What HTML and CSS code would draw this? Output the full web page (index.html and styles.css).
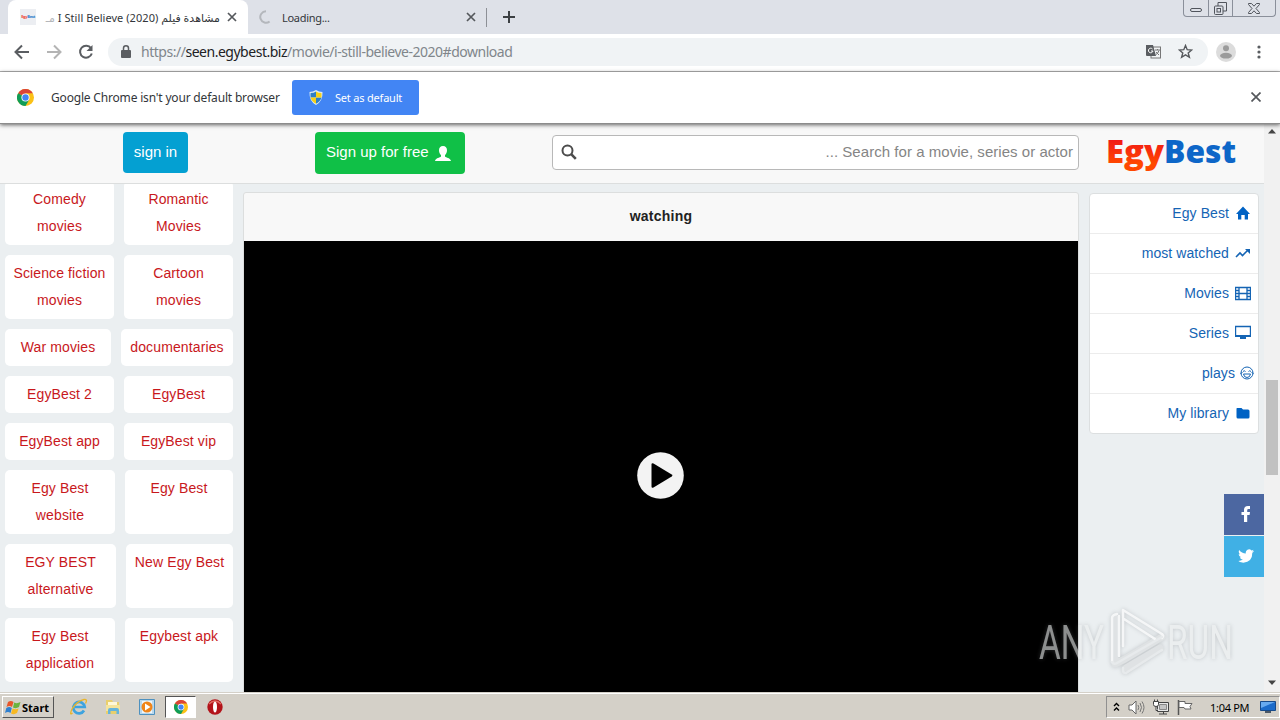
FILE: index.html
```html
<!DOCTYPE html>
<html lang="en">
<head>
  <meta charset="utf-8">
  <title>EgyBest</title>
  <link rel="stylesheet" href="styles.css">
</head>
<body>
  <div class="tabstrip">
    <div class="tab active">
      <span class="favicon"><b>Egy</b><i>Best</i></span>
      <span class="tab-title" dir="rtl"><bdi>مشاهدة فيلم</bdi> <bdi class="latin">I Still Believe (2020)</bdi> <bdi class="faded">مـ</bdi></span>
      <svg class="close" width="10" height="10" viewBox="0 0 10 10"><path d="M1 1l8 8M9 1l-8 8"/></svg>
    </div>
    <div class="tab">
      <svg class="spinner" width="14" height="14" viewBox="0 0 14 14"><path d="M7 1.3a5.7 5.7 0 1 0 3.6 10.1"/></svg>
      <span class="tab-title loading">Loading...</span>
      <svg class="close" width="10" height="10" viewBox="0 0 10 10"><path d="M1 1l8 8M9 1l-8 8"/></svg>
    </div>
    <svg class="plus" width="12" height="12" viewBox="0 0 12 12"><path d="M6 0v12M0 6h12"/></svg>
    <div class="window-buttons">
      <span class="win-min"><svg width="12" height="4" viewBox="0 0 12 4"><rect x=".5" y=".5" width="11" height="3" rx="1.5"/></svg></span>
      <span class="win-max"><svg width="13" height="13" viewBox="0 0 13 13"><path d="M4 4V.5h8.500v8.500H9"/><rect x=".5" y="4" width="8.500" height="8.500" rx="1"/><rect x="3" y="6.500" width="3.500" height="3.500"/></svg></span>
      <span class="win-close"><svg width="12" height="11" viewBox="0 0 12 11"><path d="M.5.5h3L6 3.200 8.500.500h3v1L8 5.500l3.500 4v1h-3L6 7.800 3.500 10.500h-3v-1L4 5.500.5 1.500z"/></svg></span>
    </div>
  </div>

  <div class="toolbar">
    <svg class="nav" width="16" height="16" viewBox="0 0 16 16"><path d="M15 8H2M8 1.500L1.500 8 8 14.500"/></svg>
    <svg class="nav off" width="16" height="16" viewBox="0 0 16 16"><path d="M1 8h13M8 1.500L14.500 8 8 14.500"/></svg>
    <svg class="nav" width="16" height="16" viewBox="0 0 16 16"><path d="M13 4.200A6 6 0 1 0 13.800 9.500"/><path d="M14.500 1v6h-6z" fill="#5a5d61" stroke="none"/></svg>
    <div class="omnibox">
      <svg width="10" height="13" viewBox="0 0 10 13"><rect x="0" y="5" width="10" height="8" rx="1" fill="#5a5d61"/><path d="M2.500 5V3.300a2.500 2.500 0 0 1 5 0V5" fill="none" stroke="#5a5d61" stroke-width="1.500"/></svg>
      <span class="url"><span class="scheme">https://</span><b>seen.egybest.biz</b><span class="path">/movie/i-still-believe-2020#download</span></span>
      <svg class="translate" width="15" height="15" viewBox="0 0 15 15"><rect x="5" y="3" width="9.500" height="11" fill="#f1f3f4" stroke="#777"/><path d="M0 1h7l3 11H1q-1 0-1-1z" fill="#5a5d61"/><path d="M6.500 5A2.300 2.300 0 1 0 7 7H5" fill="none" stroke="#fff"/><path d="M9 6h5M11.500 5v1M13 6.500q-1 3-3 4M10 8l3 3" fill="none" stroke="#777"/></svg>
      <svg width="15" height="15" viewBox="0 0 15 15"><path d="M7.500 1.500l1.700 4.200 4.500.300-3.500 2.900 1.200 4.400-3.900-2.400-3.900 2.400 1.200-4.400L1.300 6l4.500-.300z" fill="none" stroke="#55585c" stroke-width="1.400"/></svg>
    </div>
    <svg class="avatar" width="20" height="20" viewBox="0 0 20 20"><circle cx="10" cy="10" r="10" fill="#dcdcdc"/><circle cx="10" cy="6.300" r="3" fill="#9b9b9b"/><ellipse cx="10" cy="13.700" rx="6" ry="2.900" fill="#9b9b9b"/></svg>
    <svg class="dots" width="4" height="14" viewBox="0 0 4 14" fill="#5a5d61"><circle cx="2" cy="2" r="1.600"/><circle cx="2" cy="7" r="1.600"/><circle cx="2" cy="12" r="1.600"/></svg>
  </div>

  <div class="infobar">
    <svg width="17" height="17" viewBox="0 0 48 48"><circle cx="24" cy="24" r="24" fill="#fbc116"/><path d="M24 24L3.200 12A24 24 0 0 1 44.800 12H24z" fill="#db4437"/><path d="M3.200 12A24 24 0 0 0 24 48l10.400-18L24 24z" fill="#0f9d58"/><circle cx="24" cy="24" r="11.500" fill="#fff"/><circle cx="24" cy="24" r="9" fill="#4285f4"/></svg>
    <span class="info-text">Google Chrome isn't your default browser</span>
    <button class="default-btn">
      <svg width="14" height="15" viewBox="0 0 14 15"><path d="M7 0q3 2 6.500 2 .5 9-6.500 13Q0 11 .5 2 4 2 7 0z" fill="#dcebf5"/><path d="M7 1.500v6H1.600Q1.300 5 1.600 3 5 3 7 1.500zM7 7.500h5.400Q11.500 11.500 7 13.800z" fill="#2f7fc6"/><path d="M7 1.500v6h5.400q.3-2.500 0-4.500Q9 3 7 1.500zM7 7.500H1.600Q2.500 11.500 7 13.800z" fill="#f7d117"/></svg>
      <span>Set as default</span>
    </button>
    <svg class="close" width="10" height="10" viewBox="0 0 10 10"><path d="M.5.5l9 9M9.500.5l-9 9"/></svg>
  </div>

  <div class="viewport">
    <div class="page">
      <header class="header">
        <a class="btn signin">sign in</a>
        <a class="btn signup"><span>Sign up for free</span>
          <svg width="16" height="15" viewBox="0 0 16 15"><path d="M8 0c2.600 0 4 1.700 4 4.200 0 2-.8 3.800-2 4.800v1.500c1 1.200 5.500 1.500 6 4.500H0c.5-3 5-3.300 6-4.500V9C4.800 8 4 6.200 4 4.200 4 1.700 5.400 0 8 0z" fill="#fff"/></svg>
        </a>
        <div class="search">
          <svg width="16" height="16" viewBox="0 0 16 16"><circle cx="6.500" cy="6.500" r="5" fill="none" stroke="#4c4c4c" stroke-width="2"/><path d="M10.200 10.200l4.600 4.600" stroke="#4c4c4c" stroke-width="2.600"/></svg>
          <span>... Search for a movie, series or actor</span>
        </div>
        <svg class="logo" width="134" height="46" viewBox="0 0 134 46">
          <defs><linearGradient id="red" x1="0" y1="0" x2="0" y2="1"><stop offset="0.200" stop-color="#f01418"/><stop offset="0.800" stop-color="#ff4800"/></linearGradient></defs>
          <text x="-1" y="34" textLength="58" lengthAdjust="spacingAndGlyphs" fill="url(#red)">Egy</text>
          <text x="57" y="34" textLength="72" lengthAdjust="spacingAndGlyphs" fill="#0d66c8">Best</text>
        </svg>
      </header>

      <div class="columns">
        <div class="tags">
          <div class="tag-row"><a class="w109">Comedy<br>movies</a><a>Romantic<br>Movies</a></div>
          <div class="tag-row"><a class="w109">Science fiction<br>movies</a><a>Cartoon<br>movies</a></div>
          <div class="tag-row"><a class="w106">War movies</a><a>documentaries</a></div>
          <div class="tag-row"><a class="w109">EgyBest 2</a><a>EgyBest</a></div>
          <div class="tag-row"><a class="w109">EgyBest app</a><a>EgyBest vip</a></div>
          <div class="tag-row"><a class="w110">Egy Best<br>website</a><a>Egy Best</a></div>
          <div class="tag-row"><a class="w111">EGY BEST<br>alternative</a><a>New Egy Best</a></div>
          <div class="tag-row"><a class="w110">Egy Best<br>application</a><a>Egybest apk</a></div>
        </div>

        <div class="watch">
          <h2>watching</h2>
          <div class="player">
            <svg width="47" height="47" viewBox="0 0 47 47"><circle cx="23.500" cy="23.500" r="23.300" fill="#f3f3f3"/><path d="M14.500 12.500q0-2 2-1l18.200 11q1.600 1 0 2l-18.200 11q-2 1-2-1z" fill="#000"/></svg>
          </div>
        </div>

        <nav class="menu">
          <a>Egy Best<svg width="16" height="16" viewBox="0 0 16 16"><path d="M8 1.500L15 9h-2v5.500H9.700V10H6.300v4.500H3V9H1z" fill="#0062c4"/></svg></a>
          <a>most watched<svg width="16" height="16" viewBox="0 0 16 16"><path d="M1 12l4-4 2.500 2.500L13 5" fill="none" stroke="#1464b4" stroke-width="1.600"/><path d="M10 4h5v5z" fill="#1464b4"/></svg></a>
          <a>Movies<svg width="16" height="16" viewBox="0 0 16 16"><path d="M.5 2.500h15v12H.5zM4 2.500v12M12 2.500v12M4 8.500h8M.5 5.500H4M.5 8.500H4M.5 11.500H4M12 5.500h3.500M12 8.500h3.500M12 11.500h3.500" fill="none" stroke="#1464b4" stroke-width="1.300"/></svg></a>
          <a>Series<svg width="16" height="16" viewBox="0 0 16 16"><path d="M.5 1.500h15V11H.5z" fill="none" stroke="#1464b4" stroke-width="1.400"/><path d="M0 10h16v2h-5v2H5v-2H0z" fill="#1464b4"/></svg></a>
          <a class="plays">plays<svg width="14" height="14" viewBox="0 0 14 14" fill="none" stroke="#1464b4"><circle cx="7" cy="7" r="6"/><path d="M3 5.500q1.200-1.500 2.500 0M8.500 5.500q1.200-1.500 2.500 0M3.500 8h7q-.5 3.500-3.500 3.500T3.500 8zM.5 7.500l2-1M13.500 7.500l-2-1"/></svg></a>
          <a>My library<svg width="16" height="16" viewBox="0 0 16 16"><path d="M2 3h4.500L8 4.500h5q1.500 0 1.500 1.500v6q0 1.500-1.500 1.500H3Q1.500 13.500 1.500 12V3.500z" fill="#0062c4"/></svg></a>
        </nav>
      </div>

      <div class="social">
        <a class="fb"><svg width="10" height="16" viewBox="0 0 10 16"><path d="M3 16V9H.5V6H3V4q0-4 4-4h2v3H7.500Q6.200 3 6.200 4.200V6H9l-.4 3H6.200v7z" fill="#fff"/></svg></a>
        <a class="tw"><svg width="16" height="14" viewBox="0 0 24 20"><path d="M24 2.400q-1.200.5-2.800.8Q22.800 2.200 23.300.500q-1.500.9-3.100 1.200A4.900 4.900 0 0 0 11.800 6.200Q5.500 6 1.700.900 0 5 3.200 7.500 2 7.400 1 6.900q0 3.800 3.900 4.800-1 .3-2.200.1 1 3.200 4.600 3.400Q4.300 17.500 0 17.300 2 20 8 20 21.500 19 21.500 5.100 23.200 4 24 2.400z" fill="#fff"/></svg></a>
      </div>

      <svg class="watermark" width="204" height="74" viewBox="0 0 204 74">
        <g class="wm-mark" fill="none" stroke-linejoin="round" stroke-linecap="round">
          <path class="wm-shade" d="M79 12v46l10-5M89 53l37-22M90 62l34-20"/>
          <path d="M76 56V12q0-3 5-4M83 50V10M87 40V4l39 24q2 2 0 4M88 13l31 20"/>
          <path class="wm-low" d="M76 56q2 3 5 1l45-26M90 67l36-23M90 67q-4 0-3-5"/>
        </g>
        <g class="wm-text">
          <text x="3" y="53" textLength="65" lengthAdjust="spacingAndGlyphs">ANY</text>
          <text x="131" y="53" textLength="66" lengthAdjust="spacingAndGlyphs">RUN</text>
        </g>
      </svg>
    </div>

    <div class="scrollbar">
      <svg width="8" height="5" viewBox="0 0 8 5"><path d="M0 4.500L4 0l4 4.500z" fill="#444"/></svg>
      <div class="thumb"></div>
      <svg width="8" height="5" viewBox="0 0 8 5"><path d="M0 .5L4 5 8 .5z" fill="#444"/></svg>
    </div>
  </div>

  <div class="taskbar">
    <div class="start">
      <svg width="16" height="15" viewBox="0 0 16 15"><path d="M3 2q3-2 5.500 0L7 7Q4.500 5 1.500 7z" fill="#e8562a"/><path d="M9.200 2.500Q12 4 15.500 2L14 7q-3 2-6 .5z" fill="#6cb33e"/><path d="M1.300 8q3-2 5.500 0L5.500 13Q3 11 0 13z" fill="#2f80d0"/><path d="M7.600 8.500q3 1.500 6 0L12 13q-3 2-6 .5z" fill="#f7b922"/></svg>
      Start
    </div>
    <div class="quick">
      <svg width="18" height="18" viewBox="0 0 18 18"><path d="M14 12.500A5.700 5.700 0 1 1 14.700 9H5" fill="none" stroke="#3da3df" stroke-width="2.700"/><path d="M2.500 15Q-1 18 2 11 7 3 14 1.500q4-.5 1.500 4" fill="none" stroke="#e8b52c" stroke-width="1.300"/></svg>
      <svg width="18" height="18" viewBox="0 0 18 18"><path d="M2 2h6l1 2h6v12H2z" fill="#e9cf6d"/><path d="M4 4h9v4H4z" fill="#fff8d8"/><path d="M2 7h14v6H2z" fill="#f5e49c"/><path d="M4 16v-4q0-2 2-2h7q2 0 2 2v4h-2.500v-3h-6v3z" fill="#65b4dc"/></svg>
      <svg width="18" height="18" viewBox="0 0 18 18"><path d="M1.500 1.500h15v15h-15z" fill="#b9d8ed" stroke="#4e91bf"/><path d="M4 3h10v12H4z" fill="#eef6fb"/><circle cx="9" cy="9" r="5.500" fill="#f08519"/><path d="M7 5.500L12.500 9 7 12.500z" fill="#fff"/></svg>
    </div>
    <div class="running">
      <svg width="14" height="14" viewBox="0 0 48 48"><circle cx="24" cy="24" r="24" fill="#fbc116"/><path d="M24 24L3.200 12A24 24 0 0 1 44.800 12H24z" fill="#db4437"/><path d="M3.200 12A24 24 0 0 0 24 48l10.400-18L24 24z" fill="#0f9d58"/><circle cx="24" cy="24" r="11.500" fill="#fff"/><circle cx="24" cy="24" r="9" fill="#4285f4"/></svg>
    </div>
    <svg class="opera" width="16" height="16" viewBox="0 0 16 16"><circle cx="8" cy="8" r="7.700" fill="#b3131a"/><path d="M2 5q6-6 12 0" fill="none" stroke="#e06a62" stroke-width="1.500"/><ellipse cx="8" cy="8" rx="2" ry="5.500" fill="#fff"/></svg>
    <div class="tray">
      <svg width="7" height="10" viewBox="0 0 7 10"><path d="M1 4l2.500-2.500L6 4M1 8.500L3.500 6 6 8.500" fill="none" stroke="#000" stroke-width="1.400"/></svg>
      <svg width="17" height="15" viewBox="0 0 17 15"><path d="M1 5h3l4-4v13l-4-4H1z" fill="#fff" stroke="#666"/><path d="M10 5q1.500 2.500 0 5M12 3q3 4.500 0 9M14 1.500q4 6 0 12" fill="none" stroke="#777"/></svg>
      <svg width="16" height="16" viewBox="0 0 16 16"><path d="M4.500 3.500h11v9h-11zM6 15h8M10.500 13v2" fill="#e8e8e8" stroke="#444"/><path d="M6.500 5.500h7v5h-7z" fill="#c4c4c4" stroke="#888"/><path d="M.5 2.500h5v3q0 2-2.500 2t-2.500-2zM1.500.5v2M4.500.5v2M3 7.500v4h2" fill="#fff" stroke="#444"/></svg>
      <svg width="16" height="15" viewBox="0 0 16 15"><path d="M1.500 0v15" stroke="#555" stroke-width="1.500"/><path d="M2 1.500h6v2h7l-2 3 1 2.500H8l-1-1.500H2z" fill="#fff" stroke="#666"/></svg>
      <span class="clock">1:04 PM</span>
      <svg width="16" height="13" viewBox="0 0 16 13"><path d="M.5.5h15v9H.5z" fill="#1b6bca" stroke="#174a8a"/><path d="M1 1h14L1 7z" fill="#67aaf0"/><path d="M5 10h6v2H5z" fill="#4c5866"/></svg>
    </div>
  </div>
</body>
</html>
```

FILE: styles.css
```css
* {
  box-sizing: border-box;
}

body {
  margin: 0;
  width: 1280px;
  height: 720px;
  overflow: hidden;
  display: flex;
  flex-direction: column;
  font-family: "Liberation Sans", Arial, sans-serif;
  background: #fff;
}

svg {
  display: block;
  flex: none;
}

/* browser window */
.tabstrip {
  height: 34px;
  flex: none;
  display: flex;
  background: #dee1e8;
  font: 11px "Noto Sans", sans-serif;
  color: #33363a;
}

.tab {
  width: 239px;
  display: flex;
  align-items: center;
  padding-left: 11px;
  background: linear-gradient(#8d9096, #8d9096) right 8px / 1px 19px no-repeat;
}

.tab.active {
  width: 240px;
  margin-left: 8px;
  padding-left: 12px;
  background: #fff;
  border-radius: 8px 8px 0 0;
}

.favicon {
  width: 16px;
  height: 16px;
  background: #eceef2;
  font-size: 4px;
  line-height: 16px;
  text-align: center;
  white-space: nowrap;
  letter-spacing: -0.3px;
}

.favicon b {
  color: #f04030;
}

.favicon i {
  color: #2878c8;
  font-style: normal;
  font-weight: bold;
}

.tab-title {
  margin-left: 9px;
  white-space: nowrap;
  font-family: "Noto Sans", "DejaVu Sans", sans-serif;
}

.tab-title.loading {
  width: 184px;
  letter-spacing: -0.3px;
}

.active .tab-title {
  width: 176px;
  margin-left: 8px;
}

.latin {
  letter-spacing: 0.05px;
}

.faded {
  color: #b4b6b9;
}

.close {
  fill: none;
  stroke: #55585c;
  stroke-width: 1.7;
}

.active .close {
  margin-left: 7px;
}

.spinner {
  fill: none;
  stroke: #b4b7bc;
  stroke-width: 2;
}

.plus {
  margin: 11px 0 0 16px;
  stroke: #3c4043;
  stroke-width: 2;
}

.window-buttons {
  margin-left: auto;
  margin-right: 4px;
  width: 93px;
  height: 17px;
  display: flex;
  border: 1px solid #8a8f9a;
  border-top: 0;
  border-radius: 0 0 4px 4px;
  fill: none;
  stroke: #50545c;
}

.window-buttons span {
  display: flex;
  justify-content: center;
  align-items: center;
  width: 25px;
  border-right: 1px solid #8a8f9a;
}

.window-buttons .win-min {
  padding-top: 4px;
}

.window-buttons .win-close {
  width: 42px;
  border: 0;
}

.toolbar {
  height: 38px;
  flex: none;
  display: flex;
  align-items: center;
  padding: 0 19px 2px 14px;
  border-bottom: 1px solid #b4b4b4;
}

.nav {
  margin-right: 16px;
  fill: none;
  stroke: #5a5d61;
  stroke-width: 2;
}

.nav.off {
  stroke: #b4b4b4;
}

.omnibox {
  flex: 1;
  height: 28px;
  margin-left: -2px;
  padding: 0 14px 0 13px;
  display: flex;
  align-items: center;
  border-radius: 14px;
  background: #f0f3f5;
}

.url {
  margin-left: 10px;
  font: 14px "Noto Sans", sans-serif;
  letter-spacing: -0.48px;
  color: #80868b;
}

.url b {
  font-weight: normal;
  color: #202124;
}

.translate {
  margin: 0 17px 0 auto;
}

.omnibox {
  padding-right: 14px;
  margin-right: -8px;
}

.omnibox svg:last-child {
  margin-right: 1px;
}

.avatar {
  margin-left: 16px;
}

.dots {
  margin-left: 21px;
}

.infobar {
  height: 52px;
  flex: none;
  display: flex;
  align-items: center;
  padding: 0 19px 1px 17px;
  border-bottom: 1px solid #8c8c8c;
  box-shadow: 0 1px 4px rgba(0, 0, 0, 0.6);
  position: relative;
  z-index: 3;
  background: #fff;
  font: 12px "Noto Sans", sans-serif;
  color: #33363a;
}

.info-text {
  margin-left: 17px;
  width: 241px;
  white-space: nowrap;
  letter-spacing: -0.18px;
}

.default-btn {
  width: 127px;
  height: 35px;
  padding: 0 0 0 17px;
  display: flex;
  align-items: center;
  border: 0;
  border-radius: 3px;
  background: #4285f4;
  color: #fff;
  font: 11px "Noto Sans", sans-serif;
}

.default-btn span {
  margin-left: 12px;
  white-space: nowrap;
  letter-spacing: -0.2px;
}

.infobar .close {
  margin-left: auto;
}

/* site */
.viewport {
  height: 568px;
  flex: none;
  display: flex;
}

.page {
  width: 1264px;
  position: relative;
  overflow: hidden;
  background: #ebeff1;
}

.header {
  height: 60px;
  display: flex;
  align-items: flex-start;
  padding: 8px 0 0 123px;
  position: relative;
  z-index: 2;
  background: #f8f8f8;
  border-bottom: 1px solid #dcdede;
}

.btn {
  height: 41px;
  border-radius: 4px;
  color: #fff;
  font-size: 15px;
  line-height: 39px;
  white-space: nowrap;
}

.signin {
  width: 65px;
  text-align: center;
  background: #04a0d2;
}

.signup {
  width: 150px;
  height: 42px;
  margin-left: 127px;
  padding-left: 11px;
  display: flex;
  background: #10c047;
}

.signup span {
  width: 109px;
}

.signup svg {
  margin-top: 14px;
}

.search {
  width: 527px;
  height: 35px;
  margin: 3px 0 0 87px;
  padding: 0 5px 2px 8px;
  display: flex;
  align-items: center;
  justify-content: space-between;
  border: 1px solid #b8b8b8;
  border-radius: 4px;
  background: #fff;
  color: #858585;
  font-size: 15px;
  letter-spacing: 0.04px;
}

.logo {
  margin: -3px 0 0 28px;
}

.logo text {
  font: 800 32px "Open Sans", sans-serif;
}

.columns {
  display: flex;
  align-items: flex-start;
}

.tags {
  width: 228px;
  margin: -3px 0 0 5px;
  display: flex;
  flex-direction: column;
  gap: 10px;
}

.tag-row {
  display: flex;
  gap: 10px;
}

.tag-row a {
  flex: 1;
  padding: 5px 0;
  border-radius: 5px;
  background: #fff;
  color: #c8181c;
  text-align: center;
  font-size: 14px;
  line-height: 27px;
  letter-spacing: 0.12px;
  white-space: nowrap;
}

.tag-row .w106 {
  flex: 0 0 106px;
}

.tag-row .w109 {
  flex: 0 0 109px;
}

.tag-row .w110 {
  flex: 0 0 110px;
}

.tag-row .w111 {
  flex: 0 0 111px;
}

.watch {
  width: 836px;
  margin: 8px 0 0 10px;
  border: 1px solid #dcdede;
  border-radius: 3px 3px 0 0;
  background: #f8f8f8;
}

.watch h2 {
  margin: 0;
  height: 48px;
  font-size: 14px;
  line-height: 47px;
  letter-spacing: 0.25px;
  text-align: center;
  color: #222;
}

.player {
  height: 469px;
  padding-right: 1px;
  display: flex;
  justify-content: center;
  align-items: center;
  background: #000;
}

.menu {
  width: 170px;
  margin: 9px 0 0 10px;
  border: 1px solid #dcdfe0;
  border-radius: 4px;
  background: #fff;
}

.menu a {
  height: 40px;
  padding: 0 7px 2px 0;
  display: flex;
  align-items: center;
  justify-content: flex-end;
  gap: 6px;
  border-bottom: 1px solid #ececec;
  color: #1464b4;
  font-size: 14px;
  letter-spacing: 0.08px;
}

.menu a:last-child {
  height: 39px;
  padding-bottom: 1px;
  border-bottom: 0;
}

.menu .plays {
  padding-right: 4px;
  gap: 5px;
}

.social {
  position: absolute;
  right: 0;
  top: 370px;
  display: grid;
  gap: 1px;
}

.social a {
  width: 40px;
  height: 41px;
  padding: 0 0 1px 3px;
  display: flex;
  align-items: center;
  justify-content: center;
}

.fb {
  background: #4c67a1;
}

.tw {
  background: #40b0e5;
}

/* overlay mark in the corner */
.watermark {
  position: absolute;
  left: 1036px;
  top: 482px;
  overflow: visible;
  filter: drop-shadow(0 0 2px rgba(120, 125, 130, 0.6));
  opacity: 0.6;
}

.wm-mark {
  stroke: #fcfcfc;
  stroke-width: 2.5;
}

.wm-mark .wm-shade {
  stroke: #d8dbdc;
  stroke-width: 7;
}

.wm-mark .wm-low {
  stroke: #e6e8e9;
}

.wm-text text {
  font: 49px Roboto, sans-serif;
  fill: #eceeee;
}

.scrollbar {
  width: 16px;
  padding: 5px 0 7px;
  display: flex;
  flex-direction: column;
  align-items: center;
  background: #f1f1f1;
}

.thumb {
  width: 12px;
  height: 95px;
  margin: 246px 0 auto;
  background: #c1c1c1;
}

/* desktop taskbar */
.taskbar {
  height: 28px;
  flex: none;
  display: flex;
  align-items: center;
  padding: 1px 0 0 2px;
  border-top: 1px solid #d4d0c8;
  background: #d4d0c8;
  box-shadow: inset 0 1px #fff;
}

.start {
  width: 52px;
  height: 22px;
  padding-left: 2px;
  display: flex;
  align-items: center;
  gap: 1px;
  border: 1px solid;
  border-color: #fff #555 #555 #fff;
  font: bold 11px "Noto Sans", sans-serif;
}

.quick {
  display: flex;
  gap: 16px;
  margin-left: 16px;
}

.running {
  width: 31px;
  height: 22px;
  margin-left: 9px;
  display: flex;
  justify-content: center;
  align-items: center;
  border: 1px solid;
  border-color: #555 #fff #fff #555;
  background: #fff;
}

.opera {
  margin-left: 11px;
}

.tray {
  width: 174px;
  height: 22px;
  margin-left: auto;
  padding-left: 6px;
  display: flex;
  align-items: center;
  gap: 8px;
  border: 1px solid;
  border-color: #909090 #fff #fff #909090;
}

.clock {
  margin: 0 3px 0 9px;
  font: 11px "Noto Sans", sans-serif;
  letter-spacing: -0.3px;
  white-space: nowrap;
}
```
